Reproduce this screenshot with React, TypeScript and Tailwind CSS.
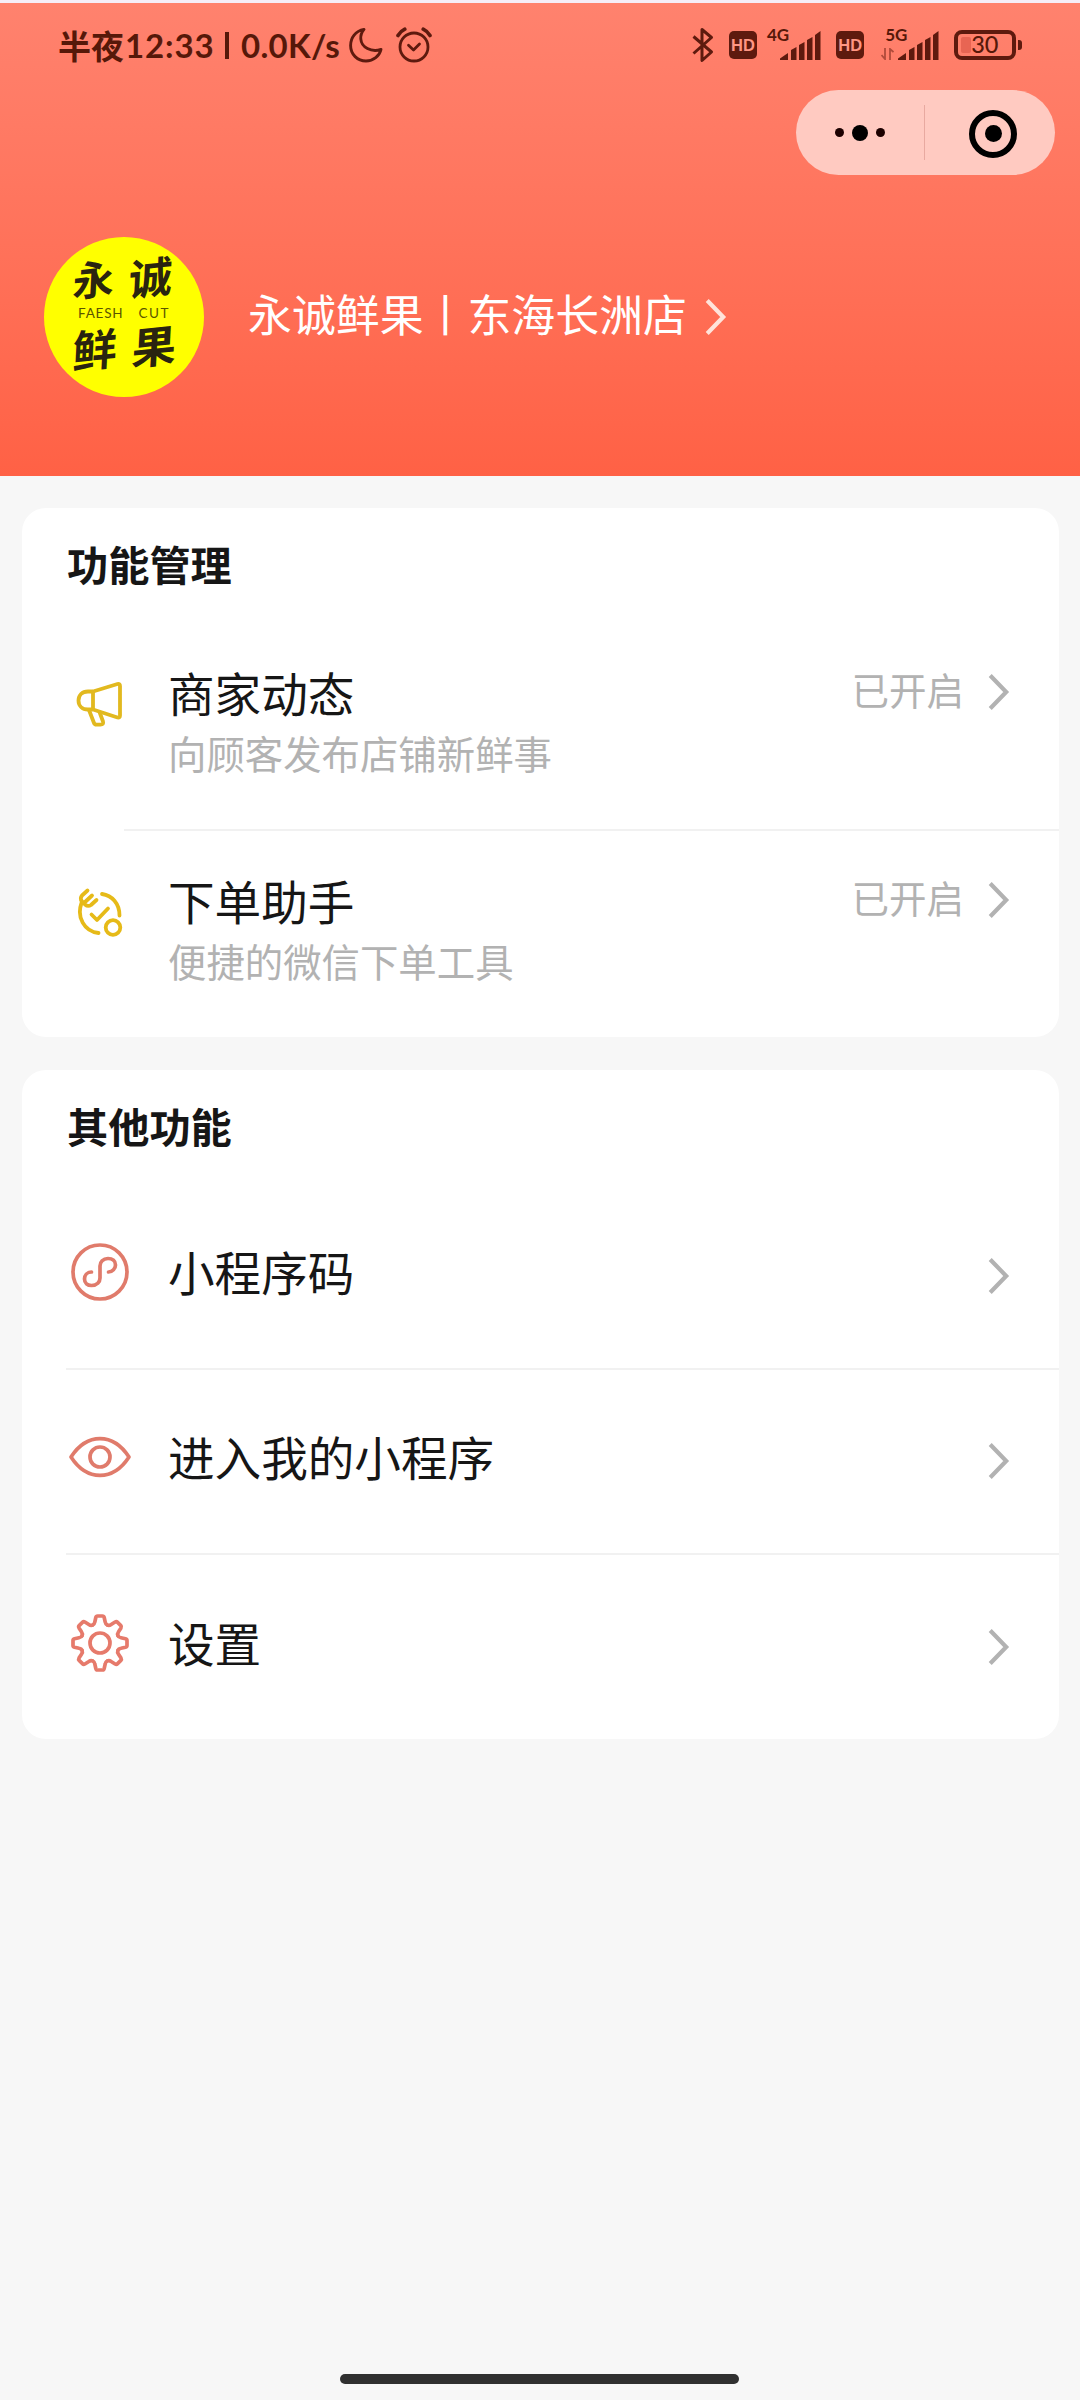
import React from "react";

const STATUS = "#5e1a0e";

function Chevron({ className }: { className?: string }) {
  return (
    <svg width="22" height="38" viewBox="0 0 22 38" fill="none" className={className}>
      <path d="M2.2 2.5 18.200 19 2.2 35.5" stroke="currentColor" strokeWidth="4.2" />
    </svg>
  );
}

function SignalBars() {
  return (
    <svg width="41" height="30" viewBox="0 0 41 30" fill={STATUS}>
      <path d="M0 29V27.5L8 22V29Z" />
      <path d="M11 29V19L16.500 16V29Z" />
      <path d="M19 29V14L24.500 11V29Z" />
      <path d="M27 29V9L32.500 6V29Z" />
      <path d="M35 29V4L40.500 0V29Z" />
    </svg>
  );
}

function HdBadge() {
  return (
    <div className="flex h-7 w-7 items-center justify-center rounded-[5px] bg-[#5e1a0e] font-['Liberation_Sans'] text-[16.500px] leading-none font-bold text-[#ff9683]">
      HD
    </div>
  );
}

function StatusBar() {
  return (
    <div className="flex h-[84px] items-center pl-[60px] text-[#561809]">
      <div className="flex w-[289px] shrink-0 items-center leading-none font-bold whitespace-pre">
        <span className="-ml-[2px] w-[67px] text-[33px] font-semibold">半夜</span>
        <span className="w-[100px] font-['Lato'] text-[33px] tracking-[0.900px]">12:33</span>
        <span className="mr-[12px] h-[27px] w-[4px] bg-[#561809]" />
        <span className="font-['Lato'] text-[33px] tracking-[0.300px]">0.0K/s</span>
      </div>
      <svg width="34" height="36" viewBox="0 0 34 36" fill="none" stroke={STATUS} strokeWidth="2.900" strokeLinejoin="round">
        <path d="M15 2.4C6.500 4 1.600 10.500 1.600 18.500C1.600 27.500 8.500 34 17 34C24.500 34 30.500 29 32 22.500C22 25.500 12.500 20.500 11.800 12C11.500 8.500 12.800 5 15 2.400Z" />
      </svg>
      <svg width="36" height="36" viewBox="0 0 36 36" fill="none" stroke={STATUS} strokeWidth="2.8" strokeLinecap="round" strokeLinejoin="round" className="ml-[13px]">
        <circle cx="18" cy="20" r="14" />
        <path d="m12.500 18.300 5 4.700 6-6" />
        <path d="M2 8.500C3.500 6 6 3.500 8.800 2.200M34 8.500C32.500 6 30 3.500 27.200 2.200" strokeWidth="3.6" />
      </svg>

      <div className="ml-[260px] flex items-center">
        <svg width="22" height="36" viewBox="0 0 22 36" fill="none" stroke={STATUS} strokeWidth="3" strokeLinejoin="round">
          <path d="M1.500 9.500 19.500 25 10 33.500V2.500L19.500 10.500 1.500 26.500" />
        </svg>
        <div className="ml-[15px]">
          <HdBadge />
        </div>
        <div className="ml-[10px] flex h-[31px] items-end">
          <span className="-mr-[9px] self-start font-['Lato'] text-[17px] leading-[10px] font-bold">4G</span>
          <SignalBars />
        </div>
        <div className="ml-[15px]">
          <HdBadge />
        </div>
        <div className="ml-[17px] flex h-[31px] items-end">
          <div className="mr-[-9px] flex w-[26px] flex-col">
            <span className="pl-[4px] font-['Lato'] text-[17px] leading-[10px] font-bold">5G</span>
            <svg width="13" height="12" viewBox="0 0 13 12" fill="none" stroke="#b04b3b" strokeWidth="1.800" className="mt-[8px] mb-px">
              <path d="M.5 7 4 11V0M12.500 4 9 1V12" />
            </svg>
          </div>
          <SignalBars />
        </div>
        <div className="ml-[15px] flex h-[30px] w-[62px] items-center rounded-[8px] border-[4px] border-[#5e1a0e] font-['Lato'] text-[23.500px] leading-none font-medium">
          <span className="ml-[3px] h-4 w-[10px] shrink-0 rounded-[2px] bg-[#e86553]" />
          <span>30</span>
        </div>
        <div className="ml-[2px] h-[10px] w-[4px] rounded-r-[3px] bg-[#5e1a0e]" />
      </div>
    </div>
  );
}

function Capsule() {
  return (
    <div className="mt-[3px] mr-[25px] ml-auto flex h-[85px] w-[259px] items-center rounded-full bg-[#ffcac1]">
      <div className="flex w-[128px] items-center justify-center gap-2">
        <span className="h-[9px] w-[9px] rounded-full bg-[#1c0000]" />
        <span className="h-4 w-4 rounded-full bg-black" />
        <span className="h-[9px] w-[9px] rounded-full bg-[#1c0000]" />
      </div>
      <div className="h-[55px] w-px bg-[#e8a9a0]" />
      <div className="mt-[2px] ml-[44px] flex h-[48px] w-[48px] items-center justify-center rounded-full border-[6px] border-black">
        <span className="h-[17px] w-[17px] rounded-full bg-black" />
      </div>
    </div>
  );
}

function ShopLogo() {
  return (
    <div className="flex h-40 w-40 flex-col items-center rounded-full bg-[#ffff00] leading-none font-bold text-[#2a2410]">
      <div className="mt-[17px] ml-[-4px] flex h-[48px] -skew-x-3 -skew-y-6 items-center gap-[15px] text-[43px]">
        <span className="mt-[-8px] text-[41px]">永</span>
        <span>诚</span>
      </div>
      <div className="mt-[5px] flex h-[14px] w-[92px] items-center justify-between font-['Lato'] text-[13.500px] font-normal tracking-[0.800px] text-[#5b5500]">
        <span>FAESH</span>
        <span className="tracking-[1.500px]">CUT</span>
      </div>
      <div className="flex h-[48px] -skew-x-3 -skew-y-6 items-center gap-[15px] text-[44px]">
        <span className="mt-[-2px]">鲜</span>
        <span className="mt-[3px]">果</span>
      </div>
    </div>
  );
}

function MegaphoneIcon() {
  return (
    <svg width="48" height="48" viewBox="0 0 48 48" fill="none" stroke="#e2b91f" strokeWidth="3.800" strokeLinejoin="round">
      <path d="M17 10.500H12C6 10.500 2.500 14.500 2.500 19.500S6 28.500 12 28.500H17L41.500 36.500Q44 37 44 34.500V5Q44 2.300 41.500 3Z" />
      <path d="M17 10.500V28.500M13 29 18 42Q18.600 43.600 20.500 43.600H24.500Q28 43.600 27 40.500L23.500 31" />
    </svg>
  );
}

function AssistantIcon() {
  return (
    <svg width="48" height="52" viewBox="0 0 48 52" fill="none" stroke="#e6ba18" strokeWidth="3.800" strokeLinecap="round" strokeLinejoin="round">
      <path d="M26 7C36 8.500 43.500 16.500 43.500 28.500" />
      <path d="M5.500 16C.5 30 8 44.500 22.500 46" />
      <circle cx="37" cy="40.500" r="7.300" />
      <path d="m15.500 27.500 5.500 5.500 11-11.500" />
      <path d="M11.500 3.500 6 8.500Q3.500 11.500 6 14.500L9 17.500Q12 20 15 18L20.500 13M8 16 16 8.500" />
    </svg>
  );
}

function MiniProgramIcon() {
  return (
    <svg width="60" height="60" viewBox="-30 -30 60 60" fill="none" stroke="#e07b6b" strokeWidth="3.700">
      <circle r="27" />
      <path strokeLinecap="round" d="M-8.500 0C-13 0-15.500 3.500-15.500 7C-15.500 11-12.500 13.500-8.500 13.500C-3 13.500 0 10 0 6V-6C0-10 3-13.500 8-13.500C12.500-13.500 15.500-11 15.500-7C15.500-3.500 12.500 0 8.500 0" />
    </svg>
  );
}

function EyeIcon() {
  return (
    <svg width="64" height="44" viewBox="-32 -22 64 44" fill="none" stroke="#e07b6b" strokeWidth="3.700" strokeLinejoin="round">
      <path d="M-29 0C-13-24.500 13-24.500 29 0C13 24.500-13 24.500-29 0Z" />
      <circle r="10" />
    </svg>
  );
}

function GearIcon() {
  const teeth = [0, 45, 90, 135, 180, 225, 270, 315];
  return (
    <svg width="60" height="60" viewBox="-30 -30 60 60" fill="none" stroke="#e67a6b" strokeWidth="3.700" strokeLinecap="round">
      <circle r="10" />
      {teeth.map((angle) => (
        <path
          key={angle}
          transform={`rotate(${angle})`}
          d="M-7.400-17.900Q-5.600-18.600-5.200-21L-4.200-25.500Q-3.800-27-2.500-27H2.500Q3.800-27 4.200-25.500L5.200-21Q5.600-18.600 7.400-17.900"
        />
      ))}
    </svg>
  );
}

const manageItems = [
  { title: "商家动态", desc: "向顾客发布店铺新鲜事", icon: <MegaphoneIcon /> },
  { title: "下单助手", desc: "便捷的微信下单工具", icon: <AssistantIcon /> },
];

const otherItems = [
  { title: "小程序码", icon: <MiniProgramIcon /> },
  { title: "进入我的小程序", icon: <EyeIcon /> },
  { title: "设置", icon: <GearIcon /> },
];

export default function App() {
  return (
    <div className="flex h-[2400px] w-[1080px] flex-col overflow-hidden bg-[#f7f7f7] font-['Noto_Sans_CJK_SC',sans-serif] text-[#161616]">
      <div className="h-[3px] shrink-0 bg-[#f6eef8]" />

      {/* Header */}
      <header className="flex h-[473px] shrink-0 flex-col bg-linear-to-b from-[#ff826e] to-[#ff6145]">
        <StatusBar />
        <Capsule />
        <div className="mt-[62px] ml-[44px] flex items-center">
          <ShopLogo />
          <span className="ml-[44px] pb-[7px] text-[43.900px] leading-none text-white">永诚鲜果丨东海长洲店</span>
          <Chevron className="ml-[18px] text-[#ffe3da]" />
        </div>
      </header>

      {/* Feature management */}
      <section className="mt-8 ml-[22px] h-[529px] w-[1037px] shrink-0 rounded-[24px] bg-white">
        <h2 className="flex h-[115px] items-center pb-[4px] pl-[45px] text-[41.200px] leading-none font-bold">功能管理</h2>
        {manageItems.map((item, i) => (
          <div key={item.title}>
            {i > 0 && <div className="ml-[102px] h-[2px] bg-[#f1f1f1]" />}
            <div className="flex h-[206px] items-start pt-[44px]">
              <div className="mt-[12px] ml-[54px] flex h-[52px] w-[92px] items-center">{item.icon}</div>
              <div className="flex-1">
                <div className="text-[46.600px] leading-[50px]">{item.title}</div>
                <div className="mt-[12px] text-[38.400px] leading-[46px] text-[#b2b2b2]">{item.desc}</div>
              </div>
              <div className="mr-[49px] flex items-center text-[#b2b2b2]">
                <span className="text-[37.500px] leading-[40px]">已开启</span>
                <Chevron className="mt-[6px] ml-[24px]" />
              </div>
            </div>
          </div>
        ))}
      </section>

      {/* Other features */}
      <section className="mt-[33px] ml-[22px] h-[669px] w-[1037px] shrink-0 rounded-[24px] bg-white">
        <h2 className="flex h-[114px] items-center pb-[2px] pl-[45px] text-[41.200px] leading-none font-bold">其他功能</h2>
        {otherItems.map((item, i) => (
          <div key={item.title}>
            {i > 0 && <div className="ml-[44px] h-[2px] bg-[#f1f1f1]" />}
            <div className="flex h-[183.500px] items-center">
              <div className="ml-[46px] flex w-[64px] items-center justify-center pb-[8px]">{item.icon}</div>
              <div className="ml-[36px] flex-1 pb-[9px] text-[46.600px] leading-none">{item.title}</div>
              <Chevron className="mr-[49px] text-[#b2b2b2]" />
            </div>
          </div>
        ))}
      </section>

      {/* Home indicator */}
      <div className="mr-auto mt-auto mb-4 ml-[340px] h-[10px] w-[399px] shrink-0 rounded-full bg-[#303030]" />
    </div>
  );
}
